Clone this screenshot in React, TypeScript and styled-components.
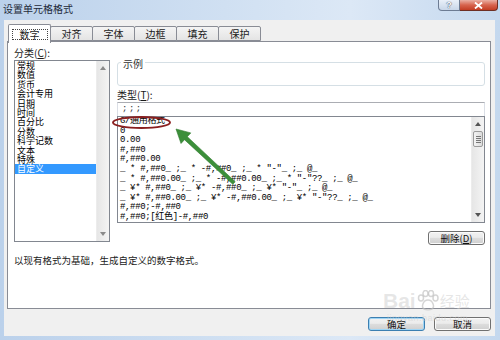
import styled, { createGlobalStyle } from 'styled-components';

const UI_FONT = `"Noto Sans CJK SC", "Liberation Sans", sans-serif`;
const MONO_FONT = `"Liberation Mono", "Noto Sans CJK SC", monospace`;

const GlobalStyle = createGlobalStyle`
  html, body {
    margin: 0;
    padding: 0;
  }
  body {
    width: 500px;
    height: 340px;
    overflow: hidden;
    background: #c6d9ef;
  }
`;

const Window = styled.div`
  position: relative;
  width: 500px;
  height: 340px;
  box-sizing: border-box;
  display: flex;
  flex-direction: column;
  padding: 0 5px 4px 4px;
  background: linear-gradient(to right, #bbd1eb 0%, #d0e0f2 45%, #dce8f6 70%, #c4d8ee 100%);
  font-family: ${UI_FONT};
  color: #1a1a1a;
`;

const TitleBar = styled.div`
  height: 20px;
  flex: none;
  display: flex;
  align-items: flex-start;
  margin: 0 -3px 0 -1px;
`;

const Title = styled.div`
  padding-top: 4px;
  font-size: 10px;
  line-height: 10px;
  color: #1e2a3a;
`;

const CaptionButtons = styled.div`
  margin-left: auto;
  display: flex;
`;

const HelpButton = styled.div`
  width: 22px;
  height: 11px;
  box-sizing: border-box;
  border: 1px solid #6d7c93;
  border-top: none;
  border-radius: 0 0 0 4px;
  background: linear-gradient(#e9f0f9, #c8d6e8);
  display: flex;
  align-items: center;
  justify-content: center;
  font: bold 9px/9px "Liberation Sans", sans-serif;
  color: #fff;
  text-shadow: 0 0 1px #3d4b60, 0 0 1px #3d4b60;
`;

const CloseButton = styled.div`
  width: 38px;
  height: 11px;
  box-sizing: border-box;
  border: 1px solid #6e2f24;
  border-top: none;
  border-left: none;
  border-radius: 0 0 4px 0;
  background: linear-gradient(#eab0a4 0%, #d7644e 50%, #c23d24 100%);
  display: flex;
  align-items: center;
  justify-content: center;
`;

const Body = styled.div`
  flex: 1;
  display: flex;
  flex-direction: column;
  padding: 4px 4px 0 3px;
  background: #f0f0f0;
`;

const TabRow = styled.div`
  height: 17px;
  flex: none;
  display: flex;
  padding-left: 1px;
`;

const Tab = styled.div<{ $active?: boolean }>`
  position: relative;
  z-index: ${(p) => (p.$active ? 2 : 1)};
  width: 43px;
  height: ${(p) => (p.$active ? 19 : 15)}px;
  margin-top: ${(p) => (p.$active ? 0 : 2)}px;
  box-sizing: border-box;
  border: 1px solid #898c95;
  border-bottom: ${(p) => (p.$active ? 'none' : '1px solid #898c95')};
  border-radius: 2px 2px 0 0;
  background: ${(p) => (p.$active ? '#fff' : 'linear-gradient(#f4f4f4, #e4e4e4)')};
  display: flex;
  align-items: center;
  justify-content: center;
  font-size: 10px;
  line-height: 10px;
  & + & {
    margin-left: -1px;
  }
`;

const FocusRect = styled.span`
  border: 1px dotted #444;
  padding: 0 7px;
  line-height: 9px;
`;

const Panel = styled.div`
  height: 268px;
  flex: none;
  box-sizing: border-box;
  display: flex;
  flex-direction: column;
  padding: 5px 5px 0 6px;
  background: #fff;
  border: 1px solid #898c95;
`;

const Columns = styled.div`
  display: grid;
  grid-template-columns: 96px 1fr;
  column-gap: 7px;
`;

const Column = styled.div`
  display: flex;
  flex-direction: column;
`;

const FieldLabel = styled.div<{ $gap?: number }>`
  margin-top: ${(p) => p.$gap ?? 0}px;
  font-size: 10px;
  line-height: 12px;
  height: 12px;
`;

const ListBox = styled.div<{ $height: number; $gap?: number }>`
  height: ${(p) => p.$height}px;
  margin-top: ${(p) => p.$gap ?? 0}px;
  box-sizing: border-box;
  display: flex;
  background: #fff;
  border: 1px solid #828790;
`;

const Items = styled.div<{ $mono?: boolean }>`
  flex: 1;
  min-width: 0;
  overflow: ${(p) => (p.$mono ? 'hidden' : 'visible')};
  font-family: ${(p) => (p.$mono ? MONO_FONT : UI_FONT)};
  font-size: 9px;
  letter-spacing: ${(p) => (p.$mono ? '-0.35px' : '0')};
  line-height: ${(p) => (p.$mono ? 9.6 : 9.4)}px;
  color: #000;
`;

const Item = styled.div<{ $selected?: boolean }>`
  padding-left: 2px;
  white-space: pre;
  background: ${(p) => (p.$selected ? '#3399ff' : 'transparent')};
  color: ${(p) => (p.$selected ? '#fff' : '#000')};
`;

const ScrollBar = styled.div`
  width: 12px;
  flex: none;
  display: flex;
  flex-direction: column;
  background: linear-gradient(to right, #e6e6e6, #f4f4f4);
  border-left: 1px solid #ececec;
`;

const ScrollArrow = styled.div`
  height: 14px;
  display: flex;
  align-items: center;
  justify-content: center;
`;

const ScrollTrack = styled.div`
  flex: 1;
  display: flex;
  flex-direction: column;
  align-items: center;
`;

const ScrollThumb = styled.div`
  width: 10px;
  height: 16px;
  box-sizing: border-box;
  border: 1px solid #9b9b9b;
  border-radius: 2px;
  background: linear-gradient(to right, #f3f3f3, #dcdcdc);
  display: flex;
  flex-direction: column;
  align-items: center;
  justify-content: center;
  gap: 1px;
`;

const Grip = styled.div`
  width: 5px;
  height: 1px;
  background: #777;
`;

const GroupBox = styled.div`
  margin-top: 15px;
  height: 24px;
  box-sizing: border-box;
  border: 1px solid #d5dfe5;
  border-radius: 3px;
`;

const GroupLabel = styled.div`
  width: fit-content;
  margin: -5px 0 0 3px;
  padding: 0 2px;
  background: #fff;
  font-size: 10px;
  line-height: 12px;
  color: #333;
`;

const TextInput = styled.div`
  height: 14px;
  margin-top: 1px;
  box-sizing: border-box;
  padding-left: 4px;
  border: 1px solid #dbdfe6;
  border-top-color: #abadb3;
  border-bottom: none;
  font-family: ${MONO_FONT};
  font-size: 9px;
  line-height: 12px;
  letter-spacing: 1.5px;
  color: #333;
`;

const ButtonRow = styled.div<{ $gap: number }>`
  display: flex;
  justify-content: flex-end;
  gap: 9px;
  margin-top: ${(p) => p.$gap}px;
`;

const Button = styled.div<{ $default?: boolean }>`
  width: 57px;
  height: 14px;
  box-sizing: border-box;
  border: 1px solid ${(p) => (p.$default ? '#3c7fb1' : '#707070')};
  border-radius: 3px;
  background: linear-gradient(#f2f2f2 0%, #ebebeb 45%, #dddddd 50%, #cfcfcf 100%);
  box-shadow: ${(p) => (p.$default ? 'inset 0 0 0 1px #9fd5f5' : 'inset 0 0 0 1px #fbfbfb')};
  display: flex;
  align-items: center;
  justify-content: center;
  font-size: 9.5px;
  line-height: 10px;
  color: #111;
`;

const Description = styled.div`
  margin-top: 9px;
  font-size: 9.5px;
  line-height: 12px;
`;

const Overlay = styled.svg`
  position: absolute;
  left: 0;
  top: 0;
  pointer-events: none;
`;

const Watermark = styled.div`
  position: absolute;
  left: 383px;
  top: 289px;
  display: flex;
  flex-direction: column;
  pointer-events: none;
  color: rgba(205, 205, 205, 0.5);
  font-family: "Liberation Sans", ${UI_FONT};
`;

const WatermarkMain = styled.div`
  display: flex;
  align-items: center;
  font-size: 21px;
  line-height: 24px;
  font-weight: bold;
`;

const WatermarkCjk = styled.span`
  font-family: ${UI_FONT};
  font-size: 15px;
  font-weight: normal;
`;

const WatermarkUrl = styled.div`
  font-size: 9px;
  line-height: 10px;
  padding-left: 4px;
  letter-spacing: 0.5px;
`;

const Arrow = ({ up, color = '#555' }: { up?: boolean; color?: string }) => (
  <svg width="6" height="4" viewBox="0 0 6 4">
    <polygon points={up ? '0,4 6,4 3,0' : '0,0 6,0 3,4'} fill={color} />
  </svg>
);

const categories = ['常规', '数值', '货币', '会计专用', '日期', '时间', '百分比', '分数', '科学记数', '文本', '特殊', '自定义'];

const formats = [
  'G/通用格式',
  '0',
  '0.00',
  '#,##0',
  '#,##0.00',
  '_ * #,##0_ ;_ * -#,##0_ ;_ * "-"_ ;_ @_',
  '_ * #,##0.00_ ;_ * -#,##0.00_ ;_ * "-"??_ ;_ @_',
  '_ ¥* #,##0_ ;_ ¥* -#,##0_ ;_ ¥* "-"_ ;_ @_',
  '_ ¥* #,##0.00_ ;_ ¥* -#,##0.00_ ;_ ¥* "-"??_ ;_ @_',
  '#,##0;-#,##0',
  '#,##0;[红色]-#,##0',
];

const tabs = ['数字', '对齐', '字体', '边框', '填充', '保护'];

export default function App() {
  return (
    <>
      <GlobalStyle />
      <Window>
        <TitleBar>
          <Title>设置单元格格式</Title>
          <CaptionButtons>
            <HelpButton>?</HelpButton>
            <CloseButton>
              <svg width="9" height="7" viewBox="0 0 9 7">
                <path d="M1 0.5 L8 6.5 M8 0.5 L1 6.5" stroke="#fff" strokeWidth="1.8" />
              </svg>
            </CloseButton>
          </CaptionButtons>
        </TitleBar>

        <Body>
          <TabRow>
            {tabs.map((t, i) => (
              <Tab key={t} $active={i === 0}>
                {i === 0 ? <FocusRect>{t}</FocusRect> : t}
              </Tab>
            ))}
          </TabRow>

          <Panel>
            <Columns>
              <Column>
                <FieldLabel>
                  分类(<u>C</u>):
                </FieldLabel>
                <ListBox $height={182} $gap={1}>
                  <Items>
                    {categories.map((c) => (
                      <Item key={c} $selected={c === '自定义'}>
                        {c}
                      </Item>
                    ))}
                  </Items>
                  <ScrollBar>
                    <ScrollArrow>
                      <Arrow up color="#8a8a8a" />
                    </ScrollArrow>
                    <ScrollTrack />
                    <ScrollArrow>
                      <Arrow color="#8a8a8a" />
                    </ScrollArrow>
                  </ScrollBar>
                </ListBox>
              </Column>

              <Column>
                <GroupBox>
                  <GroupLabel>示例</GroupLabel>
                </GroupBox>
                <FieldLabel $gap={3}>
                  类型(<u>T</u>):
                </FieldLabel>
                <TextInput>;;;</TextInput>
                <ListBox $height={107}>
                  <Items $mono>
                    {formats.map((f) => (
                      <Item key={f}>{f}</Item>
                    ))}
                  </Items>
                  <ScrollBar>
                    <ScrollArrow>
                      <Arrow up />
                    </ScrollArrow>
                    <ScrollTrack>
                      <ScrollThumb>
                        <Grip />
                        <Grip />
                        <Grip />
                        <Grip />
                      </ScrollThumb>
                    </ScrollTrack>
                    <ScrollArrow>
                      <Arrow />
                    </ScrollArrow>
                  </ScrollBar>
                </ListBox>
                <ButtonRow $gap={8}>
                  <Button>
                    删除(<u>D</u>)
                  </Button>
                </ButtonRow>
              </Column>
            </Columns>
            <Description>以现有格式为基础，生成自定义的数字格式。</Description>
          </Panel>

          <ButtonRow $gap={8}>
            <Button $default>确定</Button>
            <Button>取消</Button>
          </ButtonRow>
        </Body>

        <Watermark>
          <WatermarkMain>
            Bai
            <svg width="24" height="22" viewBox="0 0 24 22">
              <g fill="none" stroke="rgba(190,190,190,0.65)" strokeWidth="1.5">
                <ellipse cx="5" cy="8" rx="2.5" ry="3" />
                <ellipse cx="9.5" cy="3.5" rx="2.5" ry="3" />
                <ellipse cx="15" cy="3.5" rx="2.5" ry="3" />
                <ellipse cx="19.5" cy="8" rx="2.5" ry="3" />
                <path d="M12 10 C7 10 5 17 8 19 C10 20 14 20 16 19 C19 17 17 10 12 10 Z" />
              </g>
            </svg>
            <WatermarkCjk>经验</WatermarkCjk>
          </WatermarkMain>
          <WatermarkUrl>jingyan.baidu.com</WatermarkUrl>
        </Watermark>

        <Overlay width="500" height="340" viewBox="0 0 500 340">
          <ellipse cx="141.5" cy="122.5" rx="28.5" ry="5.5" fill="none" stroke="#8a1f1f" strokeWidth="1.9" />
          <polygon
            points="176,129 190.8,132.9 187.3,136.7 235.2,181.7 232.8,184.3 184.5,139.7 181,143.5"
            fill="#3c8f3a"
            stroke="#2f7a2e"
            strokeWidth="0.6"
          />
        </Overlay>
      </Window>
    </>
  );
}
